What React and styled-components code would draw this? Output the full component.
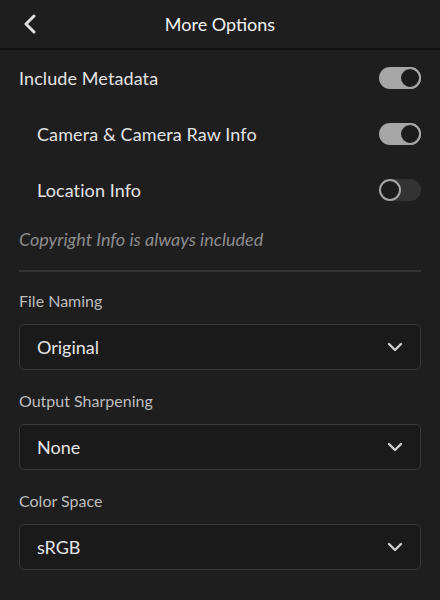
import React, { useState } from 'react';
import styled, { createGlobalStyle } from 'styled-components';

const GlobalStyle = createGlobalStyle`
  html, body {
    margin: 0;
    padding: 0;
    background: #1e1e1e;
  }
  body {
    font-family: Lato, "Open Sans", sans-serif;
  }
`;

const Page = styled.div`
  width: 440px;
  height: 600px;
  background: #1e1e1e;
  color: #e6e6e6;
  overflow: hidden;
`;

const Header = styled.div`
  height: 48px;
  display: flex;
  align-items: center;
  justify-content: center;
  position: relative;
  border-bottom: 2px solid #0f0f0f;
`;

const BackButton = styled.button`
  position: absolute;
  left: 18px;
  top: 10px;
  width: 24px;
  height: 28px;
  padding: 0;
  border: none;
  background: transparent;
  display: flex;
  align-items: center;
  justify-content: center;
`;

const Title = styled.div`
  font-size: 18px;
  color: #f2f2f2;
`;

const Body = styled.div`
  padding: 0 19px;
`;

const Row = styled.div`
  height: 56px;
  display: flex;
  align-items: center;
  justify-content: space-between;
  padding-left: ${p => (p.$indent ? '18px' : '0')};
`;

const RowLabel = styled.span`
  font-size: 18px;
  letter-spacing: 0.1px;
  color: #e3e3e3;
`;

const Track = styled.button`
  width: 42px;
  height: 22px;
  padding: 0;
  border: none;
  border-radius: 11px;
  background: ${p => (p.$on ? '#a6a6a6' : '#333333')};
  display: flex;
  align-items: center;
  justify-content: ${p => (p.$on ? 'flex-end' : 'flex-start')};
  cursor: pointer;
`;

const Knob = styled.span`
  width: 22px;
  height: 22px;
  box-sizing: border-box;
  border-radius: 50%;
  background: #1c1c1c;
  border: 2px solid #a6a6a6;
`;

const Note = styled.div`
  font-size: 18px;
  font-style: italic;
  color: #8c8c8c;
  padding: 10px 0 20px;
`;

const Divider = styled.div`
  height: 2px;
  background: #353535;
  margin-bottom: 19px;
`;

const Field = styled.div`
  margin-bottom: 21px;
`;

const FieldLabel = styled.div`
  font-size: 16px;
  color: #bdbdbd;
  margin-bottom: 14px;
`;

const Select = styled.div`
  height: 46px;
  box-sizing: border-box;
  border: 1px solid #383838;
  border-radius: 5px;
  background: #1a1a1a;
  display: flex;
  align-items: center;
  justify-content: space-between;
  padding: 0 17px 0 17px;
`;

const SelectValue = styled.span`
  font-size: 18px;
  color: #e6e6e6;
`;

const Toggle = ({ on, onClick }) => (
  <Track $on={on} onClick={onClick}>
    <Knob />
  </Track>
);

const Chevron = () => (
  <svg width="16" height="10" viewBox="0 0 16 10">
    <path d="M2 2 L8 8 L14 2" fill="none" stroke="#d0d0d0" strokeWidth="2.4" strokeLinecap="round" strokeLinejoin="round" />
  </svg>
);

const App = () => {
  const [meta, setMeta] = useState(true);
  const [camera, setCamera] = useState(true);
  const [location, setLocation] = useState(false);

  const fields = [
    { label: 'File Naming', value: 'Original' },
    { label: 'Output Sharpening', value: 'None' },
    { label: 'Color Space', value: 'sRGB' },
  ];

  return (
    <Page>
      <GlobalStyle />
      <Header>
        <BackButton>
          <svg width="14" height="20" viewBox="0 0 14 20">
            <path d="M11 2 L3 10 L11 18" fill="none" stroke="#e0e0e0" strokeWidth="3" strokeLinecap="round" strokeLinejoin="round" />
          </svg>
        </BackButton>
        <Title>More Options</Title>
      </Header>
      <Body>
        <Row>
          <RowLabel>Include Metadata</RowLabel>
          <Toggle on={meta} onClick={() => setMeta(!meta)} />
        </Row>
        <Row $indent>
          <RowLabel>Camera &amp; Camera Raw Info</RowLabel>
          <Toggle on={camera} onClick={() => setCamera(!camera)} />
        </Row>
        <Row $indent>
          <RowLabel>Location Info</RowLabel>
          <Toggle on={location} onClick={() => setLocation(!location)} />
        </Row>
        <Note>Copyright Info is always included</Note>
        <Divider />
        {fields.map(f => (
          <Field key={f.label}>
            <FieldLabel>{f.label}</FieldLabel>
            <Select>
              <SelectValue>{f.value}</SelectValue>
              <Chevron />
            </Select>
          </Field>
        ))}
      </Body>
    </Page>
  );
};

export default App;
